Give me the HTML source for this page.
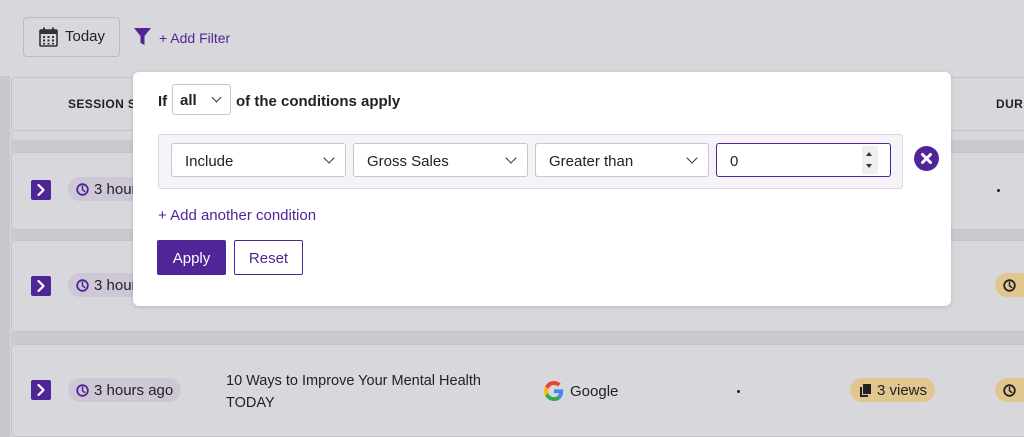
<!DOCTYPE html>
<html><head><meta charset="utf-8"><style>
*{box-sizing:border-box;margin:0;padding:0}
body{width:1024px;height:437px;overflow:hidden;background:#d8d7db;font-family:"Liberation Sans",sans-serif;position:relative;color:#222}
.abs{position:absolute}
.strip{position:absolute;left:0;top:76px;width:10px;height:361px;background:#c9c6ce}
.card{position:absolute;left:11px;right:0;background:#d8d7db;border:1px solid #c6c2cc;border-right:none;border-radius:4px 0 0 4px}
.band{position:absolute;left:11px;right:0;background:#cbc8d0}
.exp{position:absolute;left:31px;width:20px;height:20px;background:#4f2597;border-radius:2px}
.pill{position:absolute;height:24px;border-radius:12px;background:#cdc7d6;font-size:15px;line-height:26px;padding-left:26px;color:#222}
.clk{position:absolute;left:8px;top:6px}
.gold{background:#e2c690}
.pop{position:absolute;left:133px;top:72px;width:818px;height:234px;background:#fff;border-radius:6px;box-shadow:0 1px 4px rgba(0,0,0,.15)}
.sel{position:absolute;height:34px;border:1px solid #c8c6cc;border-radius:3px;background:#fff;font-size:15px;line-height:35px;padding-left:13px;color:#222}
.chev{position:absolute;right:12px;top:10px;width:8px;height:8px;border-right:1.5px solid #333;border-bottom:1.5px solid #333;transform:rotate(45deg)}
</style></head><body>
<svg width="0" height="0" style="position:absolute"><defs>
<symbol id="ck" viewBox="0 0 13 13"><circle cx="6.5" cy="6.5" r="5.3" fill="none" stroke="currentColor" stroke-width="1.8"/><path d="M6.5 3.3V6.8L8.6 8.4" fill="none" stroke="currentColor" stroke-width="1.5" stroke-linecap="round"/></symbol>
<symbol id="ar" viewBox="0 0 20 20"><path d="M7.5 5L12.5 10L7.5 15" fill="none" stroke="#fff" stroke-width="2.2" stroke-linecap="round" stroke-linejoin="round"/></symbol>
</defs></svg>
<div class="strip"></div>
<div class="abs" style="left:23px;top:17px;width:97px;height:40px;border:1px solid #bdb9c2;border-radius:4px;background:#d8d7db"></div>
<svg class="abs" style="left:39px;top:27px" width="19" height="20" viewBox="0 0 19 20"><rect x="1" y="3" width="17" height="16" rx="1" fill="none" stroke="#333" stroke-width="1.6"/><rect x="1" y="3" width="17" height="4" fill="#333"/><rect x="4" y="0.5" width="2" height="4" fill="#333"/><rect x="13" y="0.5" width="2" height="4" fill="#333"/><g fill="#333"><rect x="4" y="9" width="2" height="2"/><rect x="8.5" y="9" width="2" height="2"/><rect x="13" y="9" width="2" height="2"/><rect x="4" y="12.5" width="2" height="2"/><rect x="8.5" y="12.5" width="2" height="2"/><rect x="13" y="12.5" width="2" height="2"/><rect x="4" y="16" width="2" height="1.5"/><rect x="8.5" y="16" width="2" height="1.5"/><rect x="13" y="16" width="2" height="1.5"/></g></svg>
<div class="abs" style="left:65px;top:28px;font-size:15px;color:#222">Today</div>
<svg class="abs" style="left:134px;top:28px" width="17" height="18" viewBox="0 0 17 18"><path d="M0 0H17L10.5 8V17L6.5 15V8Z" fill="#4f2597"/></svg>
<div class="abs" style="left:159px;top:30px;font-size:14px;color:#4f2597">+ Add Filter</div>

<div class="card" style="top:77px;height:54px"></div>
<div class="abs" style="left:68px;top:97px;font-size:12px;font-weight:bold;letter-spacing:.4px;color:#222">SESSION S</div>
<div class="abs" style="left:996px;top:97px;font-size:12px;font-weight:bold;letter-spacing:.4px">DUR</div>
<div class="card" style="top:131px;height:10px;border-top:none"></div>
<div class="band" style="top:140px;height:12px"></div>
<div class="card" style="top:152px;height:78px"></div>
<div class="band" style="top:230px;height:10px"></div>
<div class="card" style="top:240px;height:92px"></div>
<div class="band" style="top:332px;height:12px"></div>
<div class="card" style="top:344px;height:93px"></div>

<div class="exp" style="top:180px"><svg width="20" height="20"><use href="#ar"/></svg></div>
<div class="pill" style="left:68px;top:177px;width:80px"><svg class="clk" width="13" height="13" style="color:#4f2597"><use href="#ck"/></svg>3 hours</div>
<div class="exp" style="top:276px"><svg width="20" height="20"><use href="#ar"/></svg></div>
<div class="pill" style="left:68px;top:273px;width:80px"><svg class="clk" width="13" height="13" style="color:#4f2597"><use href="#ck"/></svg>3 hours</div>
<div class="exp" style="top:380px"><svg width="20" height="20"><use href="#ar"/></svg></div>
<div class="pill" style="left:68px;top:378px;width:113px"><svg class="clk" width="13" height="13" style="color:#4f2597"><use href="#ck"/></svg>3 hours ago</div>
<div class="abs" style="left:226px;top:370px;font-size:14.5px;line-height:22px;color:#222">10 Ways to Improve Your Mental Health<br>TODAY</div>
<svg class="abs" style="left:544px;top:381px" width="20" height="20" viewBox="0 0 48 48"><path fill="#EA4335" d="M24 9.5c3.5 0 6.6 1.2 9.1 3.6l6.8-6.8C35.8 2.4 30.3 0 24 0 14.6 0 6.6 5.4 2.6 13.2l7.9 6.2C12.4 13.7 17.7 9.5 24 9.5z"/><path fill="#4285F4" d="M46.1 24.5c0-1.6-.1-3.1-.4-4.5H24v9h12.4c-.5 2.9-2.2 5.4-4.7 7.1l7.6 5.9c4.4-4.1 6.8-10.1 6.8-17.5z"/><path fill="#FBBC05" d="M10.5 28.6c-.5-1.4-.8-3-.8-4.6s.3-3.2.8-4.6l-7.9-6.2C.9 16.5 0 20.1 0 24s.9 7.5 2.6 10.8l7.9-6.2z"/><path fill="#34A853" d="M24 48c6.5 0 11.9-2.1 15.9-5.8l-7.6-5.9c-2.1 1.4-4.9 2.3-8.3 2.3-6.3 0-11.6-4.2-13.5-9.9l-7.9 6.2C6.6 42.6 14.6 48 24 48z"/></svg>
<div class="abs" style="left:570px;top:383px;font-size:15px">Google</div>
<div class="abs" style="left:737px;top:390px;width:3px;height:3px;background:#222;border-radius:50%"></div>
<div class="abs" style="left:997px;top:189px;width:3px;height:3px;background:#222;border-radius:50%"></div>
<div class="pill gold" style="left:850px;top:378px;width:85px;padding-left:27px"><svg class="abs" style="left:10px;top:6px" width="11" height="13" viewBox="0 0 11 13"><rect x="3" y="0" width="8" height="10" fill="#222"/><path d="M1 3V12H8" fill="none" stroke="#222" stroke-width="2"/></svg>3 views</div>
<div class="pill gold" style="left:995px;top:273px;width:40px"><svg class="clk" width="13" height="13" style="color:#222"><use href="#ck"/></svg></div>
<div class="pill gold" style="left:995px;top:378px;width:40px"><svg class="clk" width="13" height="13" style="color:#222"><use href="#ck"/></svg></div>

<div class="pop">
  <div class="abs" style="left:25px;top:21px;font-size:15px;font-weight:bold">If</div>
  <div class="sel" style="left:39px;top:12px;width:59px;height:31px;line-height:31px;padding-left:7px;font-weight:bold;border-radius:3px">all<span class="chev" style="right:10px;top:9px;width:7px;height:7px"></span></div>
  <div class="abs" style="left:103px;top:21px;font-size:15px;font-weight:bold">of the conditions apply</div>
  <div class="abs" style="left:25px;top:62px;width:745px;height:55px;background:#f5f3f8;border:1px solid #dcd6e6;border-radius:3px"></div>
  <div class="sel" style="left:38px;top:71px;width:175px">Include<span class="chev"></span></div>
  <div class="sel" style="left:220px;top:71px;width:175px">Gross Sales<span class="chev"></span></div>
  <div class="sel" style="left:402px;top:71px;width:174px">Greater than<span class="chev"></span></div>
  <div class="sel" style="left:583px;top:71px;width:175px;border:1.5px solid #4f2597">0
    <div class="abs" style="left:145px;top:2px;width:16px;height:28px;background:#efefef"></div>
    <div class="abs" style="left:149px;top:8px;border:3.5px solid transparent;border-bottom:4px solid #333;border-top:none"></div>
    <div class="abs" style="left:149px;top:20px;border:3.5px solid transparent;border-top:4px solid #333;border-bottom:none"></div>
  </div>
  <div class="abs" style="left:781px;top:74px;width:25px;height:25px;border-radius:50%;background:#4f2597"><svg width="25" height="25"><path d="M8.5 8.5L16.5 16.5M16.5 8.5L8.5 16.5" stroke="#fff" stroke-width="3" stroke-linecap="round"/></svg></div>
  <div class="abs" style="left:25px;top:135px;font-size:15px;color:#4f2597">+ Add another condition</div>
  <div class="abs" style="left:24px;top:168px;width:69px;height:35px;background:#4f2597;border-radius:2px;color:#fff;font-size:15px;line-height:38px;text-align:center">Apply</div>
  <div class="abs" style="left:101px;top:168px;width:69px;height:35px;border:1px solid #4f2597;border-radius:2px;color:#4f2597;font-size:15px;line-height:36px;text-align:center">Reset</div>
</div>
</body></html>
